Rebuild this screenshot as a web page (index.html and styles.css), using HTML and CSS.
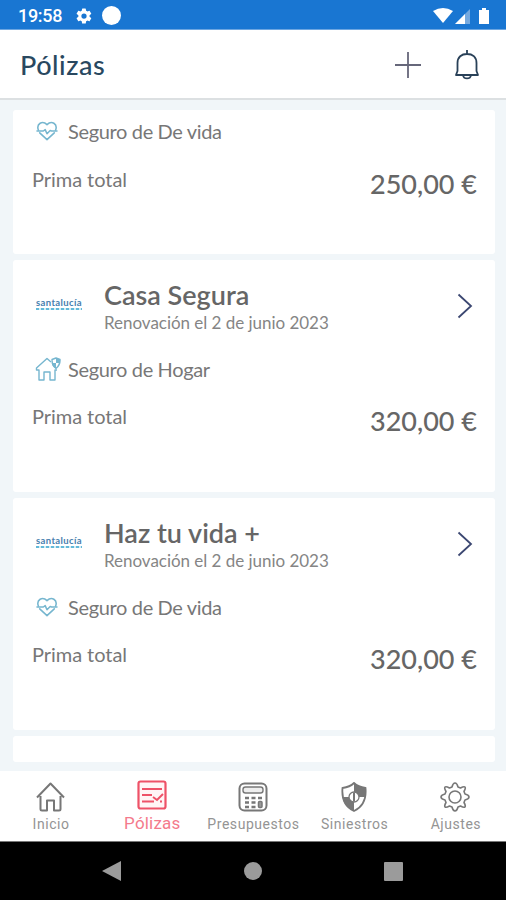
FILE: index.html
```html
<!DOCTYPE html>
<html lang="es">
<head>
<meta charset="utf-8">
<title>Pólizas</title>
<link rel="stylesheet" href="styles.css">
</head>
<body>
<svg class="defs" width="0" height="0" aria-hidden="true">
  <symbol id="gear" viewBox="0 0 24 24"><path fill-rule="evenodd" d="M19.4 13a7.5 7.5 0 0 0 0-2l2.1-1.6a.5.5 0 0 0 .1-.6l-2-3.5a.5.5 0 0 0-.6-.2l-2.5 1a7.3 7.3 0 0 0-1.7-1l-.4-2.6a.5.5 0 0 0-.5-.4h-4a.5.5 0 0 0-.5.4L9 5.1a7.3 7.3 0 0 0-1.7 1l-2.500-1a.5.5 0 0 0-.6.2l-2 3.500a.5.5 0 0 0 .1.6L4.500 11a7.500 7.500 0 0 0 0 2l-2.200 1.600a.5.5 0 0 0-.1.6l2 3.500c.1.2.4.3.6.2l2.500-1a7.300 7.300 0 0 0 1.700 1l.4 2.600c0 .3.200.5.500.5h4c.300 0 .500-.2.500-.5l.4-2.600a7.300 7.300 0 0 0 1.700-1l2.500 1c.200.1.500 0 .600-.2l2-3.500a.5.5 0 0 0-.1-.6zM12 15.500a3.500 3.500 0 1 1 0-7 3.500 3.500 0 0 1 0 7z"/></symbol>
  <symbol id="heart" viewBox="0 0 24 22"><g fill="none" stroke="currentColor" stroke-width="1.700" stroke-linejoin="round" stroke-linecap="round"><path d="M2.500 10C0 3 7-1 12 4c5-5 12-1 9.500 6M4 13l8 7.500 8-7.500"/><path d="M1 11h7l2-1.500 2 4.500 3.500-3.500 1.500.5h6"/></g></symbol>
  <symbol id="insured-home" viewBox="0 0 26 24"><g fill="none" stroke="currentColor" stroke-width="1.400" stroke-linejoin="round"><path d="M16 5 12 1.500 1.500 11v2H4v10h5v-8h6v8h5V13h2"/><path d="M17 2.500 21 1l4 1.500c.3 4-1 6.500-4 9-3-2-4-5-4-9z"/></g><path fill="currentColor" d="M21 1l4 1.500V6h-4zM16.800 6H21v5.500q-4-2-4.200-5.500z"/></symbol>
  <symbol id="chevron" viewBox="0 0 16 26"><path d="m1.500 1.500 12.500 11.500-12.500 11.500" fill="none" stroke="currentColor" stroke-width="1.800"/></symbol>
</svg>
<div class="phone">
  <div class="status">
    <span class="clock">19:58</span>
    <svg class="status-gear" width="18" height="18"><use href="#gear"/></svg>
    <span class="dot"></span>
    <svg class="signals" width="60" height="20" viewBox="0 0 60 20"><path fill="#fff" d="M2 5q10-6 20 0L12 17z"/><path fill="#75a9df" d="M24 18 39 3v15z"/><path fill="#fff" d="M24 18 34 8v10zM48 4h3V2h4v2h3v14H48z"/></svg>
  </div>
  <header class="header">
    <h1 class="title">Pólizas</h1>
    <svg class="plus" width="26" height="26" viewBox="0 0 26 26"><path d="M13 0v26M0 13h26" stroke="#66677a" stroke-width="1.800"/></svg>
    <svg class="bell" width="26" height="32" viewBox="0 0 26 32"><g fill="none" stroke="#294158" stroke-width="1.800" stroke-linejoin="round"><path d="M13 1v4M3.500 22v-8C3.500 8 7.500 5 13 5s9.500 3 9.500 9v8l1.500 4H2z"/><path d="M9 26c.5 4.500 7.500 4.500 8 0"/></g></svg>
  </header>
  <main class="list">
    <article class="card card-first">
      <div class="kind"><svg class="kind-icon" width="22" height="20"><use href="#heart"/></svg><span>Seguro de De vida</span></div>
      <div class="premium"><span class="label">Prima total</span><strong class="amount">250,00 €</strong></div>
    </article>
    <article class="card card-full">
      <div class="policy"><div class="brand"><span>santalucía</span><i></i></div><div class="details"><h2 class="name">Casa Segura</h2><p class="renewal">Renovación el 2 de junio 2023</p></div><svg class="chevron" width="16" height="26"><use href="#chevron"/></svg></div>
      <div class="kind"><svg class="kind-icon kind-home" width="26" height="24"><use href="#insured-home"/></svg><span>Seguro de Hogar</span></div>
      <div class="premium"><span class="label">Prima total</span><strong class="amount">320,00 €</strong></div>
    </article>
    <article class="card card-full">
      <div class="policy"><div class="brand"><span>santalucía</span><i></i></div><div class="details"><h2 class="name">Haz tu vida +</h2><p class="renewal">Renovación el 2 de junio 2023</p></div><svg class="chevron" width="16" height="26"><use href="#chevron"/></svg></div>
      <div class="kind"><svg class="kind-icon" width="22" height="20"><use href="#heart"/></svg><span>Seguro de De vida</span></div>
      <div class="premium"><span class="label">Prima total</span><strong class="amount">320,00 €</strong></div>
    </article>
    <article class="card card-next"></article>
  </main>
  <nav class="tabs">
    <div class="tab"><svg width="30" height="30" viewBox="0 0 30 30"><path d="M4.500 14v13q0 1.500 1.500 1.500h5V18.500h7v10h5q1.500 0 1.500-1.500V14M1 15.500 14.500 1.500 28 15.500" fill="none" stroke="currentColor" stroke-width="2" stroke-linejoin="round"/></svg><span>Inicio</span></div>
    <div class="tab active"><svg width="30" height="30" viewBox="0 0 30 30"><rect x="1.500" y="1.500" width="27" height="27" rx="2" fill="#fff5f6" stroke="currentColor" stroke-width="2.200"/><path d="M5 9h20M5 15h10M5 21.500h12m6 0h2M16 17l4 3 6-6" fill="none" stroke="currentColor" stroke-width="2"/></svg><span>Pólizas</span></div>
    <div class="tab"><svg width="30" height="30" viewBox="0 0 30 30"><rect x="1.500" y="1.500" width="27" height="27" rx="5" fill="none" stroke="currentColor" stroke-width="2"/><rect x="5" y="5" width="20" height="6" rx="2.500" fill="#eee" stroke="currentColor" stroke-width="1.400"/><path d="M7 16h4m2.500 0h4m2.500 0h4M7 20.500h4m2.500 0h4M7 25h4m2.500 0h4" stroke="currentColor" stroke-width="2.500"/><rect x="20.500" y="19.500" width="3.500" height="6" rx="1" fill="#999" stroke="currentColor" stroke-width="1.500"/></svg><span>Presupuestos</span></div>
    <div class="tab"><svg width="30" height="30" viewBox="0 0 30 30"><path d="M15 1q4 4 11.500 5c1 11-3 19-11.500 23C6.500 25 2.500 17 3.500 6 11 5 15 1 15 1z" fill="#fff" stroke="currentColor" stroke-width="1.800"/><path d="M15 1q4 4 11.500 5v9H15zM3.500 15H15v14Q5 25 3.500 15z" fill="currentColor"/><circle cx="15" cy="15" r="5" fill="#fff" stroke="currentColor" stroke-width="1.300"/><path d="M15 10.500v9" stroke="currentColor" stroke-width="2"/></svg><span>Siniestros</span></div>
    <div class="tab"><svg width="30" height="30" viewBox="0 0 30 30"><path d="M12 5q1-4 3-4t3 4l2.500 1q3.500-2 4.500-1t-1 4.500L25 12q4 1 4 3t-4 3l-1 2.500q2 3.500 1 4.500t-4.500-1L18 25q-1 4-3 4t-3-4l-2.500-1Q6 26 5 25t1-4.500L5 18q-4-1-4-3t4-3l1-2.500Q4 6 5 5t4.500 1z" fill="none" stroke="currentColor" stroke-width="1.600" stroke-linejoin="round"/><circle cx="15" cy="15" r="6" fill="none" stroke="currentColor" stroke-width="1.600"/></svg><span>Ajustes</span></div>
  </nav>
  <div class="system">
    <svg width="20" height="22" viewBox="0 0 20 22"><path d="M0 11 19 1v20z" fill="#9b9b9b"/></svg>
    <span class="system-home"></span><span class="recent"></span>
  </div>
</div>
</body>
</html>
```
FILE: styles.css
```css
* { box-sizing: border-box; }
body { margin: 0; }
.defs { position: absolute; }
.phone { width: 506px; height: 900px; display: flex; flex-direction: column; overflow: hidden; background: #fff; font-family: Lato, "Liberation Sans", sans-serif; }
svg { display: block; flex: none; }
.status { height: 30px; flex: none; display: flex; align-items: center; padding: 2px 15px 0 18px; background: #1976d2; border-bottom: 1px solid #6da6e1; }
.clock { width: 57px; color: #fff; font: 500 18px/20px Roboto, sans-serif; letter-spacing: -.3px; }
.status-gear { fill: #fff; }
.dot { width: 19px; height: 19px; margin-left: 9px; border-radius: 50%; background: #fff; }
.signals { margin-left: auto; }
.header { height: 70px; flex: none; display: flex; align-items: center; padding: 2px 26px 0 20px; border-bottom: 2px solid #dce0e2; }
.title { margin: 0 auto 0 0; color: #294860; font-size: 27px; font-weight: 500; line-height: 34px; letter-spacing: .55px; }
.plus { margin-right: 33px; }
.list { height: 671px; flex: none; padding: 10px 11px 0 13px; display: flex; flex-direction: column; gap: 6px; background: #f1f6f9; }
.card { flex: none; border-radius: 3px; background: #fff; color: #777; }
.card-first { height: 144px; padding-top: 5px; }
.card-full { height: 232px; padding-top: 18px; }
.card-next { height: 26px; }
.policy { height: 75px; display: flex; padding: 0 22px 0 23px; }
.brand { width: 46px; margin: 19px 22px 0 0; }
.brand span { display: block; color: #477eae; font-size: 9.500px; line-height: 11px; font-weight: 700; letter-spacing: .37px; white-space: nowrap; }
.brand i { display: block; height: 2px; background: repeating-linear-gradient(90deg, #63b9d9 0 3px, #d5edf5 3px 5px); }
.details { flex: 1; }
.name { margin: 0; color: #666; font-size: 27px; font-weight: 600; line-height: 34px; }
.renewal { margin: 1px 0 0; color: #858585; font-size: 17px; line-height: 20px; letter-spacing: -.03px; }
.chevron { margin-top: 15px; color: #3b4771; }
.kind { height: 32px; display: flex; align-items: center; padding-left: 23px; font-size: 20px; letter-spacing: -.35px; }
.kind-icon { margin-right: 10px; color: #76b6cf; }
.kind-home { margin: 0 7px 0 -1px; }
.premium { display: flex; justify-content: space-between; align-items: flex-start; padding: 18px 18px 0 19px; }
.card-full .premium { padding-top: 17px; }
.label { line-height: 28px; font-size: 20px; letter-spacing: -.05px; }
.amount { padding-top: 2px; font-size: 27px; font-weight: 500; line-height: 34px; color: #666; }
.tabs { height: 71px; flex: none; display: grid; grid-template-columns: repeat(5, 1fr); background: #fff; border-bottom: 1px solid #777; }
.tab { display: flex; flex-direction: column; align-items: center; padding-top: 11px; color: #777; font: 400 14px/20px Roboto, sans-serif; letter-spacing: .55px; }
.tab span { margin: 2px 0 0 1px; color: #949494; white-space: nowrap; }
.tab.active { padding-top: 9px; color: #ee5268; font-size: 17px; letter-spacing: .2px; }
.tab.active span { margin-top: 3px; color: #f47a8c; }
.system { flex: 1; display: flex; align-items: center; padding-left: 102px; background: #000; }
.system-home { width: 18px; height: 18px; margin-left: 122px; border-radius: 50%; background: #9b9b9b; }
.recent { width: 19px; height: 19px; margin-left: 122px; border-radius: 1px; background: #9b9b9b; }
```
